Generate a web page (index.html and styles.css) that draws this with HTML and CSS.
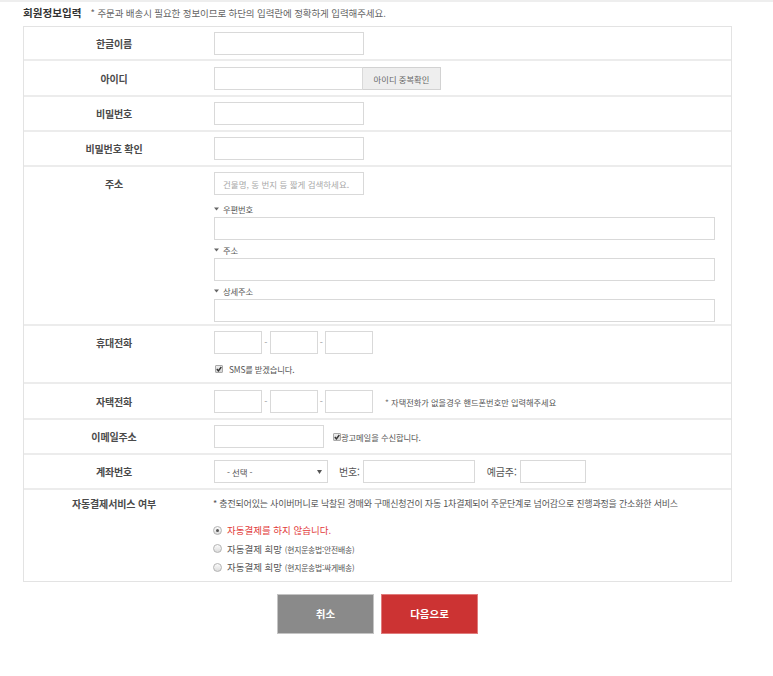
FILE: index.html
```html
<!DOCTYPE html>
<html lang="ko">
<head>
<meta charset="utf-8">
<title>회원정보입력</title>
<link rel="stylesheet" href="styles.css">
</head>
<body>
<div class="topline"></div>
<div class="wrap">
  <div class="head">
    <span class="title">회원정보입력</span>
    <span class="sub">* 주문과 배송시 필요한 정보이므로 하단의 입력란에 정확하게 입력해주세요.</span>
  </div>

  <div class="form">
    <div class="row pb4">
      <div class="lbl">한글이름</div>
      <div class="cell"><input class="inp w150" type="text"></div>
    </div>

    <div class="row pt6">
      <div class="lbl">아이디</div>
      <div class="cell">
        <div class="line"><input class="inp w149" type="text"><button class="idbtn" type="button">아이디 중복확인</button></div>
      </div>
    </div>

    <div class="row">
      <div class="lbl">비밀번호</div>
      <div class="cell"><input class="inp w150" type="password"></div>
    </div>

    <div class="row">
      <div class="lbl">비밀번호 확인</div>
      <div class="cell"><input class="inp w150" type="password"></div>
    </div>

    <div class="row pb2">
      <div class="lbl">주소</div>
      <div class="cell">
        <input class="inp w150 search" type="text" placeholder="건물명, 동 번지 등 짧게 검색하세요.">
        <div class="grp">
          <div class="glbl"><svg class="tri" width="5" height="4" viewBox="0 0 5 4"><path d="M0 0.5H5L2.5 3.5Z" fill="#666"/></svg>우편번호</div>
          <input class="inp w501" type="text">
        </div>
        <div class="grp">
          <div class="glbl"><svg class="tri" width="5" height="4" viewBox="0 0 5 4"><path d="M0 0.5H5L2.5 3.5Z" fill="#666"/></svg>주소</div>
          <input class="inp w501" type="text">
        </div>
        <div class="grp">
          <div class="glbl"><svg class="tri" width="5" height="4" viewBox="0 0 5 4"><path d="M0 0.5H5L2.5 3.5Z" fill="#666"/></svg>상세주소</div>
          <input class="inp w501" type="text">
        </div>
      </div>
    </div>

    <div class="row pb7">
      <div class="lbl">휴대전화</div>
      <div class="cell">
        <div class="line">
          <input class="inp w48" type="text"><span class="dash">-</span><input class="inp w48" type="text"><span class="dash">-</span><input class="inp w48" type="text">
        </div>
        <div class="line chkline">
          <span class="chk"><svg width="6" height="6" viewBox="0 0 6 6"><path d="M0.8 3.1L2.4 4.8L5.3 1" fill="none" stroke="#333" stroke-width="1.4"/></svg></span>
          <span class="chktxt">SMS를 받겠습니다.</span>
        </div>
      </div>
    </div>

    <div class="row pt6">
      <div class="lbl">자택전화</div>
      <div class="cell">
        <div class="line">
          <input class="inp w48" type="text"><span class="dash">-</span><input class="inp w48" type="text"><span class="dash">-</span><input class="inp w48" type="text">
          <span class="note"><span class="bullet">*</span> 자택전화가 없을경우 핸드폰번호만 입력해주세요</span>
        </div>
      </div>
    </div>

    <div class="row">
      <div class="lbl">이메일주소</div>
      <div class="cell">
        <div class="line">
          <input class="inp w110" type="text">
          <span class="chk mail"><svg width="6" height="6" viewBox="0 0 6 6"><path d="M0.8 3.1L2.4 4.8L5.3 1" fill="none" stroke="#333" stroke-width="1.4"/></svg></span>
          <span class="mailtxt">광고메일을 수신합니다.</span>
        </div>
      </div>
    </div>

    <div class="row">
      <div class="lbl">계좌번호</div>
      <div class="cell">
        <div class="line">
          <div class="select"><span>- 선택 -</span><svg width="5" height="4" viewBox="0 0 5 4"><path d="M0 0H5L2.5 4Z" fill="#555"/></svg></div>
          <span class="flbl num">번호:</span>
          <input class="inp w112" type="text">
          <span class="flbl owner">예금주:</span>
          <input class="inp w66" type="text">
        </div>
      </div>
    </div>

    <div class="row auto">
      <div class="lbl lbl-auto">자동결제서비스 여부</div>
      <div class="cell">
        <div class="autotxt">* 충전되어있는 사이버머니로 낙찰된 경매와 구매신청건이 자동 1차결제되어 주문단계로 넘어감으로 진행과정을 간소화한 서비스</div>
        <div class="radios">
          <div class="rline"><span class="radio on"><span class="dot"></span></span><span class="rtxt red">자동결제를 하지 않습니다.</span></div>
          <div class="rline"><span class="radio"></span><span class="rtxt">자동결제 희망 <small>(현지운송법:안전배송)</small></span></div>
          <div class="rline"><span class="radio"></span><span class="rtxt">자동결제 희망 <small>(현지운송법:싸게배송)</small></span></div>
        </div>
      </div>
    </div>
  </div>

  <div class="btns">
    <button class="btn gray" type="button">취소</button>
    <button class="btn redbtn" type="button">다음으로</button>
  </div>
</div>
</body>
</html>
```

FILE: styles.css
```css
* { box-sizing: border-box; }

body {
  margin: 0;
  background: #fff;
  font-family: "Noto Sans CJK KR", "Noto Sans", sans-serif;
  font-size: 9px;
  color: #555;
  letter-spacing: -0.15px;
}

.topline { height: 2px; background: #eeeeee; }

.wrap { width: 709px; margin-left: 23px; }

.head {
  height: 21px;
  margin-bottom: 3px;
  display: flex;
  align-items: center;
  white-space: nowrap;
}
.title { font-size: 10.6px; font-weight: 700; color: #333; letter-spacing: 0; }
.sub { margin-left: 9px; font-size: 9.5px; color: #666; letter-spacing: -0.1px; }

.form { border: 1px solid #e3e3e3; }

.row {
  display: grid;
  grid-template-columns: 180px 1fr;
  column-gap: 10px;
  padding: 5px 0;
  border-bottom: 2px solid #ececec;
}
.row:last-child { border-bottom: 0; }
.pt6 { padding-top: 6px; }
.pb4 { padding-bottom: 4px; }
.pb2 { padding-bottom: 2px; }
.pb7 { padding-bottom: 7px; }
.auto { padding-top: 7px; padding-bottom: 4px; }

.lbl {
  text-align: center;
  font-size: 10px;
  font-weight: 700;
  color: #4a4a4a;
  line-height: 23px;
  align-self: start;
}
.lbl-auto { line-height: 14px; }

.cell { display: flex; flex-direction: column; align-items: flex-start; }
.line { display: flex; align-items: center; }

.inp {
  display: block;
  height: 23px;
  margin: 0;
  padding: 0 8px;
  border: 1px solid #d9d9d9;
  border-radius: 0;
  background: #fff;
  font-family: inherit;
  font-size: 8.5px;
  color: #555;
  outline: none;
}
.inp::placeholder { color: #a9a9a9; }
.w48 { width: 48px; }
.w66 { width: 66px; }
.w110 { width: 110px; }
.w112 { width: 112px; }
.w149 { width: 149px; }
.w150 { width: 150px; }
.w501 { width: 501px; }

.search { margin-bottom: 4px; }

.idbtn {
  width: 78px;
  height: 23px;
  margin: 0;
  padding: 0;
  border: 1px solid #d2d2d2;
  border-left: 0;
  background: #eeeeee;
  font-family: inherit;
  font-size: 8.3px;
  color: #666;
  letter-spacing: 0;
}

.grp { margin-top: 4px; display: flex; flex-direction: column; }
.glbl {
  display: flex;
  align-items: center;
  height: 12px;
  margin-bottom: 2px;
  font-size: 8.3px;
  color: #555;
  letter-spacing: -0.1px;
}
.tri { margin-right: 4px; }

.dash {
  width: 7.5px;
  text-align: center;
  color: #999;
  font-size: 9px;
}

.chkline { margin-top: 9px; height: 12px; }
.chk {
  width: 8px;
  height: 8px;
  margin-left: 1px;
  border: 1px solid #a9a9a9;
  border-radius: 1px;
  background: linear-gradient(#eeeeee, #d4d4d4);
  display: flex;
  align-items: center;
  justify-content: center;
}
.chktxt { margin-left: 6px; font-size: 8.3px; color: #555; }
.mail { margin-left: 9px; }
.mailtxt { margin-left: 0; font-size: 8.3px; letter-spacing: -0.1px; color: #555; }

.note { margin-left: 12px; font-size: 8.2px; letter-spacing: 0; color: #555; }
.bullet { color: #777; }

.select {
  width: 114px;
  height: 23px;
  border: 1px solid #d9d9d9;
  background: #fff;
  display: flex;
  align-items: center;
  justify-content: space-between;
  padding: 0 5px 0 12px;
  font-size: 8.5px;
  color: #555;
}
.flbl { font-size: 10px; color: #555; }
.num { margin-left: 11px; margin-right: 3px; }
.owner { margin-left: 12px; margin-right: 3px; }

.autotxt { line-height: 14px; color: #555; letter-spacing: -0.2px; white-space: nowrap; margin-left: -1px; }
.radios { margin-top: 10px; display: flex; flex-direction: column; }
.rline { display: flex; align-items: center; height: 18.5px; margin-left: -1px; }
.radio {
  width: 9px;
  height: 9px;
  border-radius: 50%;
  border: 1px solid #b3b3b3;
  background: linear-gradient(#fbfbfb, #dcdcdc);
  display: flex;
  align-items: center;
  justify-content: center;
}
.dot { width: 3px; height: 3px; border-radius: 50%; background: #555; }
.rtxt { margin-left: 5px; font-size: 9.5px; color: #555; letter-spacing: 0; }
.rtxt small { font-size: 7.8px; letter-spacing: -0.2px; }
.red { color: #e23a3a; }

.btns {
  display: flex;
  justify-content: center;
  gap: 7px;
  margin-top: 12px;
}
.btn {
  width: 97px;
  height: 40px;
  margin: 0;
  padding: 0;
  font-family: inherit;
  font-size: 10.5px;
  font-weight: 700;
  color: #fff;
  letter-spacing: 0;
}
.gray { background: #8a8a8a; border: 1px solid #c4c4c4; }
.redbtn { background: #cc3333; border: 1px solid #e07b7b; }
```
